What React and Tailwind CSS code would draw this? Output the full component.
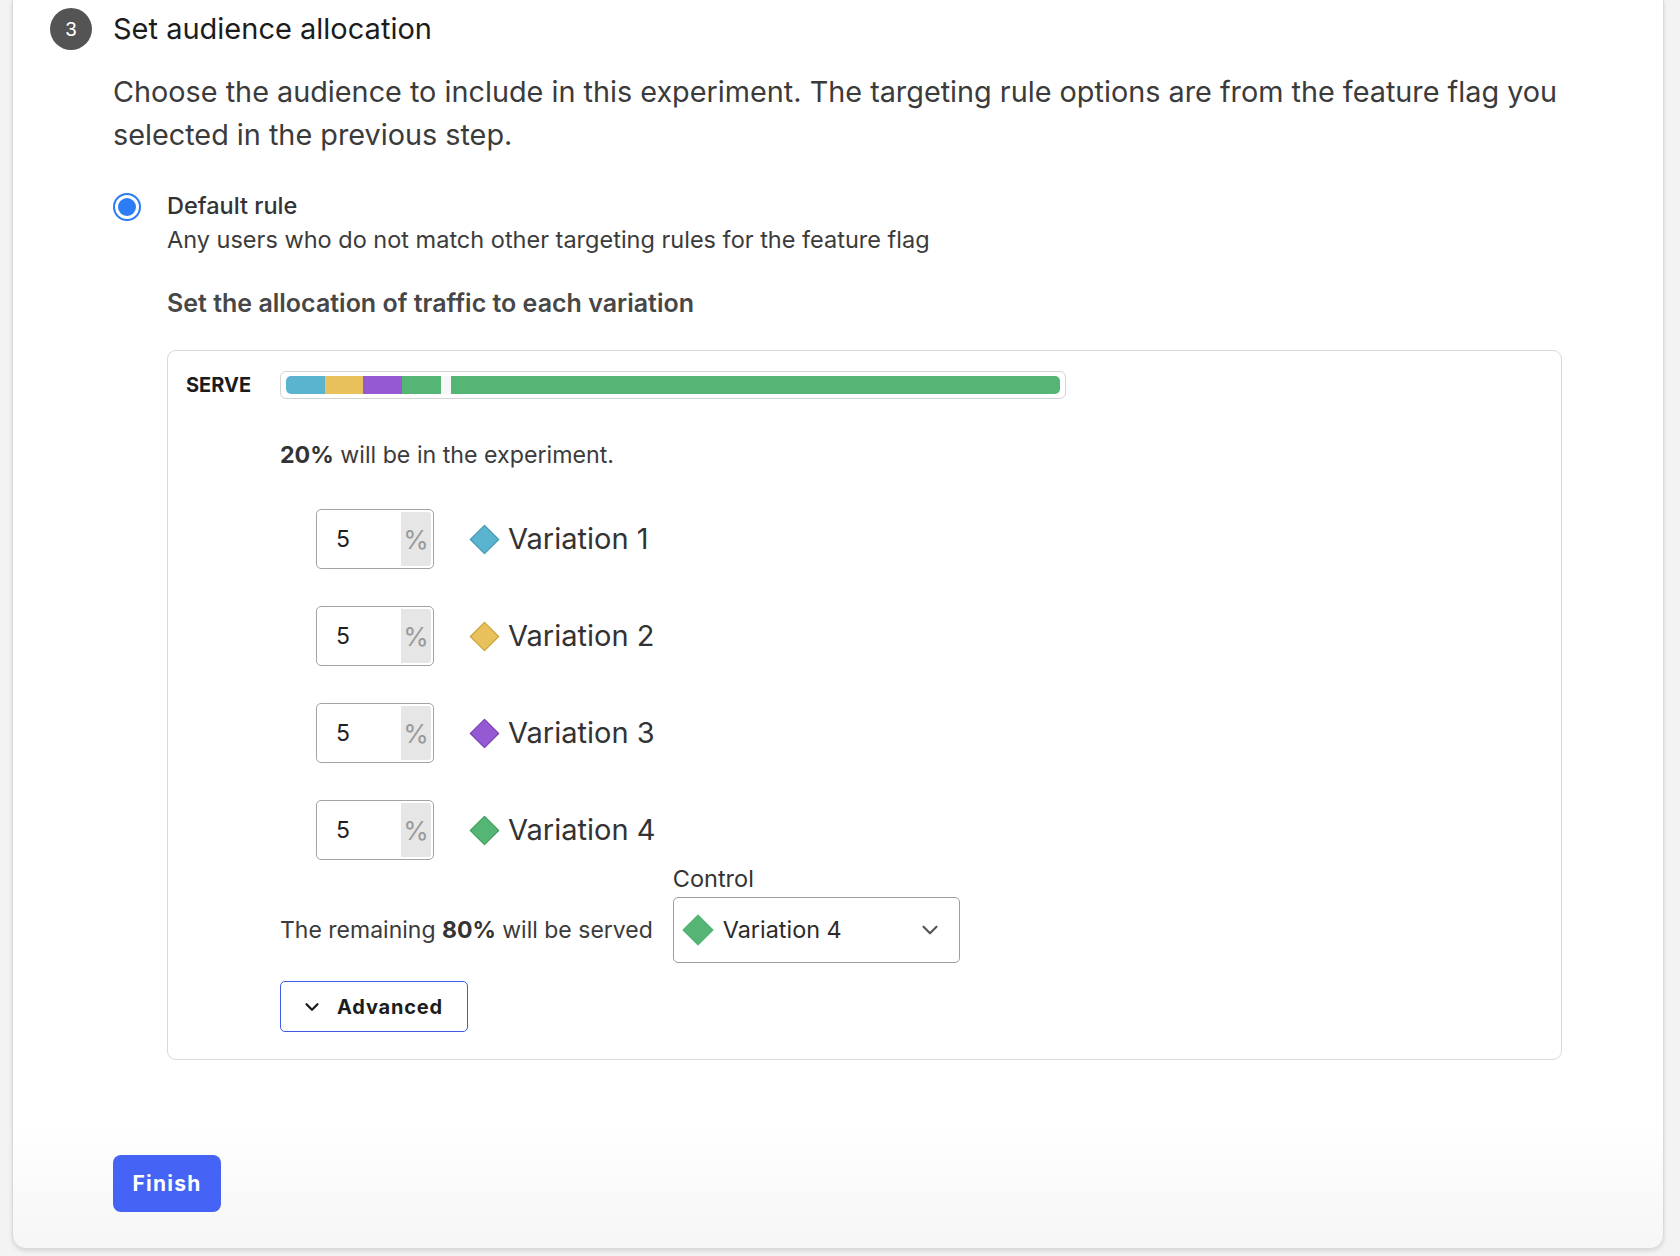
import React from 'react';
import { ChevronDown } from 'lucide-react';

const variations = [
  { id: 1, name: 'Variation 1', value: 5, color: 'bg-[#5ab4cf]', border: 'border-[#3f93ad]' },
  { id: 2, name: 'Variation 2', value: 5, color: 'bg-[#e8c15a]', border: 'border-[#c49b34]' },
  { id: 3, name: 'Variation 3', value: 5, color: 'bg-[#9559d4]', border: 'border-[#7440ad]' },
  { id: 4, name: 'Variation 4', value: 5, color: 'bg-[#54b574]', border: 'border-[#3f9a5c]' },
];

function Diamond({ color, border, size = 'w-[21px] h-[21px]' }) {
  return <span className={`inline-block rotate-45 border ${size} ${color} ${border}`} />;
}

export default function App() {
  return (
    <div
      className="w-[1680px] h-[1256px] bg-[#f3f3f3] pl-[12px] pr-[16px] pb-[7px] flex flex-col overflow-hidden"
      style={{ fontFamily: 'Inter, "Noto Sans", sans-serif' }}
    >
      {/* Step card */}
      <div className="flex-1 bg-gradient-to-b from-white from-90% to-[#f6f6f6] border-x border-b border-[#dadada] rounded-b-[14px] shadow-[0_2px_4px_rgba(0,0,0,0.12)] pl-[37px] pt-[8px] flex flex-col">
        {/* Header */}
        <div className="flex items-center gap-[22px] h-[42px]">
          <div className="w-[42px] h-[42px] rounded-full bg-[#545454] text-white flex items-center justify-center text-[20px]" style={{ fontFamily: '"Liberation Sans", Arial, sans-serif' }}>
            3
          </div>
          <h2 className="text-[29px] leading-[36px] text-[#1c1c1c] -ml-[1px]">Set audience allocation</h2>
        </div>

        <div className="pl-[63px] flex flex-col">
          <p className="mt-[20px] text-[28.8px] leading-[43px] text-[#3b3b3b] w-[1470px]">
            Choose the audience to include in this experiment. The targeting rule options are from the feature flag you selected in the previous step.
          </p>

          {/* Default rule */}
          <div className="mt-[34px] flex gap-[26px]">
            <div className="mt-[3px] w-[28px] h-[28px] rounded-full border-[2px] border-[#2b7cf5] flex items-center justify-center shrink-0">
              <div className="w-[18px] h-[18px] rounded-full bg-[#2b7cf5]" />
            </div>
            <div className="flex flex-col">
              <div className="text-[23.5px] leading-[32px] font-medium text-[#333]">Default rule</div>
              <div className="mt-[2px] text-[23.5px] leading-[32px] text-[#3b3b3b]">
                Any users who do not match other targeting rules for the feature flag
              </div>
              <div className="mt-[31px] text-[25px] leading-[32px] font-semibold text-[#474747]">
                Set the allocation of traffic to each variation
              </div>

              {/* Allocation box */}
              <div className="mt-[31px] w-[1395px] h-[710px] border border-[#d9d9d9] rounded-[9px] pt-[19px] pl-[18px] flex flex-col">
                <div className="flex items-center">
                  <div className="w-[94px] text-[20px] font-bold text-[#1c1c1c]">SERVE</div>
                  <div className="w-[786px] h-[28px] border border-[#d4d4d4] rounded-[6px] px-[5px] flex items-center">
                    <div className="flex-1 h-[18px] flex rounded-[5px] overflow-hidden">
                      {variations.map((v) => (
                        <div key={v.id} className={`h-full w-[5%] ${v.color}`} />
                      ))}
                      <div className="w-[10px] h-full bg-[#f7f7f7]" />
                      <div className="flex-1 h-full bg-[#54b574]" />
                    </div>
                  </div>
                </div>

                <div className="pl-[94px] flex flex-col">
                  <div className="mt-[39px] text-[23.2px] leading-[32px] text-[#3b3b3b]">
                    <span className="font-bold text-[#333]">20%</span> will be in the experiment.
                  </div>

                  <div className="mt-[38px] pl-[36px] flex flex-col gap-[37px]">
                    {variations.map((v) => (
                      <div key={v.id} className="flex items-center h-[60px]">
                        <div className="w-[118px] h-[60px] border border-[#a3a3a3] rounded-[5px] flex overflow-hidden">
                          <div className="flex-1 pl-[19px] flex items-center text-[23px] text-[#1f1f1f]">{v.value}</div>
                          <div className="w-[30px] mt-[2px] mr-[2px] mb-[2px] rounded-tr-[3px] rounded-br-[3px] bg-[#e6e6e6] flex items-center justify-center text-[26px] text-[#9a9a9a]">%</div>
                        </div>
                        <div className="ml-[40px] flex items-center">
                          <Diamond color={v.color} border={v.border} />
                        </div>
                        <div className="ml-[13px] text-[29px] text-[#333]">{v.name}</div>
                      </div>
                    ))}
                  </div>

                  {/* Remaining */}
                  <div className="mt-[5px] flex items-end gap-[20px]">
                    <div className="h-[66px] flex items-center text-[23px] text-[#3b3b3b]">
                      <span>
                        The remaining <span className="font-bold text-[#333]">80%</span> will be served
                      </span>
                    </div>
                    <div className="flex flex-col">
                      <div className="text-[23.5px] leading-[28px] text-[#333] mb-[4px]">Control</div>
                      <div className="w-[287px] h-[66px] border border-[#9e9e9e] rounded-[5px] pl-[13px] pr-[16px] flex items-center">
                        <Diamond color="bg-[#54b574]" border="border-[#54b574]" size="w-[22px] h-[22px]" />
                        <span className="ml-[14px] text-[23.4px] text-[#2b2b2b]">Variation 4</span>
                        <ChevronDown className="ml-auto w-[26px] h-[26px] text-[#555]" strokeWidth={2} />
                      </div>
                    </div>
                  </div>

                  <button className="mt-[18px] w-[188px] h-[51px] border border-[#3d5ce0] rounded-[5px] flex items-center pl-[20px] gap-[14px] text-[20px] font-bold tracking-[0.04em] text-[#1c1c1c]">
                    <ChevronDown className="w-[22px] h-[22px]" strokeWidth={2.5} />
                    Advanced
                  </button>
                </div>
              </div>
            </div>
          </div>

          <button className="mt-[95px] w-[108px] h-[57px] rounded-[8px] bg-[#4564f5] text-white text-[21px] font-bold tracking-[0.06em] flex items-center justify-center">
            Finish
          </button>
        </div>
      </div>
    </div>
  );
}
